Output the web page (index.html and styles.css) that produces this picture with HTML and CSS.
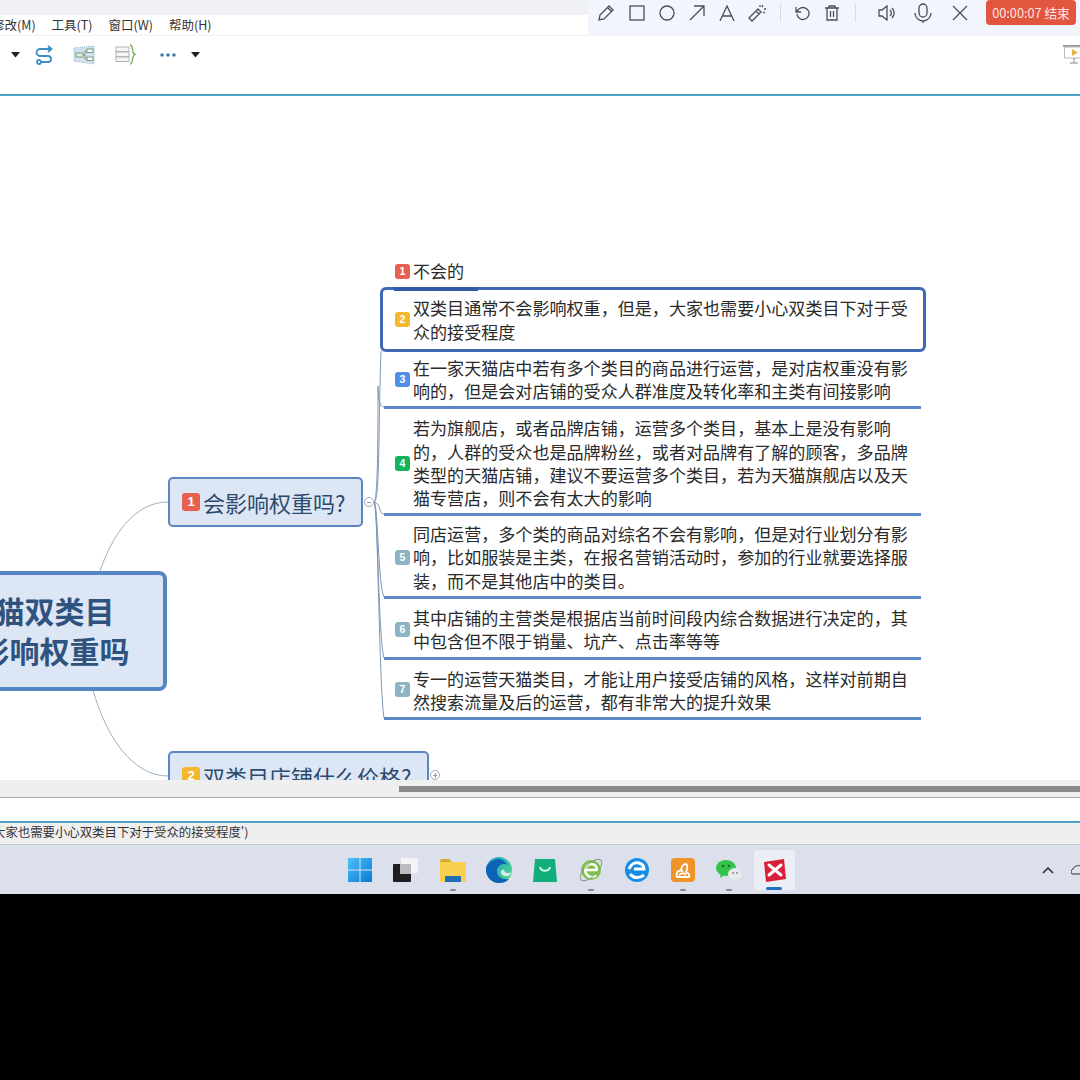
FILE: index.html
```html
<!DOCTYPE html>
<html lang="zh-CN">
<head>
<meta charset="utf-8">
<title>XMind</title>
<link rel="stylesheet" href="styles.css">
</head>
<body>
<div class="app">
  <div class="titlebar"></div>
  <nav class="menu">
    <span class="menu-first">修改(M)</span><span>工具(T)</span><span>窗口(W)</span><span>帮助(H)</span>
  </nav>
  <div class="toolbar">
    <svg class="tb caret-a" width="9" height="6" viewBox="0 0 9 6"><path d="M0 0h9L4.500 5.500z" fill="#222"/></svg>
    <svg class="tb loop" width="20" height="20" viewBox="0 0 20 20" fill="none" stroke="#3d8ec4" stroke-width="1.800"><path d="M17 4H6a3.500 3.500 0 0 0 0 7h8a3 3 0 0 1 0 6H7"/><path d="M14 1l3.500 3L14 7" /><circle cx="5" cy="17" r="2"/></svg>
    <svg class="tb struct" width="22" height="20" viewBox="0 0 22 20" fill="none"><path d="M1 3l20-2v18L1 16z" fill="#cfe2ee" stroke="#8db4cc" stroke-dasharray="1 1"/><rect x="3" y="8" width="7" height="4" fill="#e3efd8" stroke="#7e9c86"/><rect x="14" y="4" width="6" height="3.500" fill="#fff" stroke="#7e9c86"/><rect x="14" y="12" width="6" height="3.500" fill="#fff" stroke="#7e9c86"/><path d="M10 10h2M12 6v8M12 6h2M12 14h2" stroke="#7e9c86"/></svg>
    <svg class="tb summ" width="21" height="21" viewBox="0 0 21 21" fill="none"><rect x="1" y="3" width="13" height="4.500" fill="#f5f5f5" stroke="#b4b4b4"/><rect x="1" y="8" width="13" height="4.500" fill="#f5f5f5" stroke="#b4b4b4"/><rect x="1" y="13" width="13" height="4.500" fill="#f5f5f5" stroke="#b4b4b4"/><path d="M15 1c3 0 2 4 3 7 .3 1.500 1 2 2 2.500-1 .5-1.700 1-2 2.500-1 3 0 7-3 7" stroke="#6fa653" stroke-width="1.300"/></svg>
    <svg class="tb dots" width="16" height="4" viewBox="0 0 16 4"><g fill="#3a78a8"><circle cx="2" cy="2" r="1.700"/><circle cx="8" cy="2" r="1.700"/><circle cx="14" cy="2" r="1.700"/></g></svg>
    <svg class="tb caret-b" width="9" height="6" viewBox="0 0 9 6"><path d="M0 0h9L4.500 5.500z" fill="#222"/></svg>
    <svg class="tb present" width="22" height="20" viewBox="0 0 22 20" fill="none"><path d="M0 1h22" stroke="#777" stroke-width="1.500"/><rect x="1.500" y="2" width="19" height="11" fill="#fff" stroke="#bbb"/><path d="M9 4l6 3.500L9 11z" fill="#e6b54a"/><path d="M11 13v5M7 18h8" stroke="#888"/></svg>
  </div>
  <div class="rule"></div>

  <main class="canvas">
    <svg class="links" width="1080" height="684" viewBox="0 0 1080 684" fill="none" stroke="#9fb0c4" stroke-width="1">
      <path d="M100 475C112 440 134 406 168 406"/>
      <path d="M93 594C106 640 132 680 168 680"/>
      <path d="M374 406C380 406 378 340 381 255" stroke="#7f97b5"/>
      <path d="M374 406C378 406 378 330 378 290C378 300 379 311 384 311" stroke="#7f97b5"/>
      <path d="M374 406C382 408 378 418 384 418" stroke="#7f97b5"/>
      <path d="M374 406C378 406 378 490 384 501" stroke="#7f97b5"/>
      <path d="M374 406C378 406 378 540 384 562" stroke="#7f97b5"/>
      <path d="M374 406C378 406 379 590 384 622" stroke="#7f97b5"/>
    </svg>

    <div class="root">
      <p>天猫双类目<br>会影响权重吗</p>
    </div>

    <div class="topic topic-one"><span class="badge badge-big red">1</span>会影响权重吗?</div>
    <span class="toggle toggle-one"></span>
    <div class="topic topic-two"><span class="badge badge-big amber">2</span>双类目店铺什么价格?</div>
    <span class="toggle toggle-two"></span>

    <div class="list">
      <div class="row row-1"><span class="badge red">1</span><p>不会的</p></div>
      <div class="row row-2"><span class="badge amber">2</span><p>双类目通常不会影响权重，但是，大家也需要小心双类目下对于受<br>众的接受程度</p></div>
      <div class="row row-3"><span class="badge blue">3</span><p>在一家天猫店中若有多个类目的商品进行运营，是对店权重没有影<br>响的，但是会对店铺的受众人群准度及转化率和主类有间接影响</p></div>
      <div class="row row-4"><span class="badge green">4</span><p>若为旗舰店，或者品牌店铺，运营多个类目，基本上是没有影响<br>的，人群的受众也是品牌粉丝，或者对品牌有了解的顾客，多品牌<br>类型的天猫店铺，建议不要运营多个类目，若为天猫旗舰店以及天<br>猫专营店，则不会有太大的影响</p></div>
      <div class="row row-5"><span class="badge teal">5</span><p>同店运营，多个类的商品对综名不会有影响，但是对行业划分有影<br>响，比如服装是主类，在报名营销活动时，参加的行业就要选择服<br>装，而不是其他店中的类目。</p></div>
      <div class="row row-6"><span class="badge teal">6</span><p>其中店铺的主营类是根据店当前时间段内综合数据进行决定的，其<br>中包含但不限于销量、坑产、点击率等等</p></div>
      <div class="row row-7"><span class="badge teal">7</span><p>专一的运营天猫类目，才能让用户接受店铺的风格，这样对前期自<br>然搜索流量及后的运营，都有非常大的提升效果</p></div>
    </div>

    <svg class="cursor" width="12" height="18" viewBox="0 0 12 18"><path d="M1 1v13l3-3 2.500 5.500 2-1L6 10h4.500z" fill="#fff" stroke="#444" stroke-width="1"/></svg>
  </main>

  <div class="scrollbar"><div class="thumb"></div></div>
  <div class="blank"></div>
  <div class="rule"></div>
  <div class="status"><span>大家也需要小心双类目下对于受众的接受程度')</span></div>

  <footer class="taskbar">
    <div class="slot">
      <svg width="26" height="26" viewBox="0 0 26 26"><defs><linearGradient id="w" x1="0" y1="0" x2="1" y2="1"><stop offset="0" stop-color="#4cc2f5"/><stop offset="1" stop-color="#0a78d8"/></linearGradient></defs><path d="M1 1h11.500v11.500H1zM13.500 1H25v11.500H13.500zM1 13.500h11.500V25H1zM13.500 13.500H25V25H13.500z" fill="url(#w)"/></svg>
    </div>
    <div class="slot slot-task">
      <svg width="25" height="24" viewBox="0 0 25 24"><rect x="8" y="0" width="17" height="15" rx="1" fill="#f4f4f7"/><rect x="0" y="6" width="18" height="18" rx="1" fill="#1e1e22"/><rect x="7" y="6" width="11" height="10" fill="#bcbcc0"/></svg>
    </div>
    <div class="slot running">
      <svg width="26" height="25" viewBox="0 0 26 25"><path d="M0 3a2 2 0 0 1 2-2h7l3 3H0z" fill="#d9a92d"/><rect x="0" y="4" width="26" height="20" rx="1" fill="#f8cf4e"/><path d="M5 24v-5q0-1 1-1h14q1 0 1 1v5z" fill="#1e6fb8"/></svg>
    </div>
    <div class="slot">
      <svg width="26" height="26" viewBox="0 0 26 26"><defs><linearGradient id="e" x1="0" y1="0" x2="1" y2="0.700"><stop offset="0" stop-color="#1f9bd0"/><stop offset="1" stop-color="#48d48c"/></linearGradient></defs><circle cx="13" cy="13" r="13" fill="url(#e)"/><path d="M13 2C6 2 0 7 0 13c0 7 6 13 13 13 4 0 7-1 10-4-6 1-12-2-12-8 0-4 3-7 7-7 2 0 3 .5 4 1.500C19 4 16 2 13 2z" fill="#0c63b6"/><path d="M15 15c0 3 3 5 7 4 2-.7 3-2 3-4-1 1-3 1.500-4 1-2-.5-3-2-3-3.500-2 0-3 1-3 2.500z" fill="#d6ecef"/></svg>
    </div>
    <div class="slot">
      <svg width="24" height="25" viewBox="0 0 24 25"><path d="M2 1h20l2 23H0z" fill="#12ae7c"/><path d="M7 9c1 5 9 5 10 0" fill="none" stroke="#d8f5ea" stroke-width="1.800"/></svg>
    </div>
    <div class="slot running">
      <svg width="26" height="26" viewBox="0 0 26 26"><circle cx="13" cy="13" r="10" fill="#7cc242"/><path d="M7 13h12c0-4-3-6-6-6s-6 3-6 6 3 7 6 7c2 0 4-1 5-2" fill="none" stroke="#fff" stroke-width="2.500"/><ellipse cx="13" cy="13" rx="14" ry="6" transform="rotate(-45 13 13)" fill="none" stroke="#8a9a80"/></svg>
    </div>
    <div class="slot">
      <svg width="24" height="24" viewBox="0 0 24 24"><circle cx="12" cy="12" r="12" fill="#148ce8"/><path d="M4 11c2-5 6-7 10-6 3 1 5 3 5 6H9M5 16c3 4 9 5 14 1" fill="none" stroke="#fff" stroke-width="3"/></svg>
    </div>
    <div class="slot running">
      <svg width="24" height="24" viewBox="0 0 24 24"><rect width="24" height="24" rx="4" fill="#f0942a"/><path d="M6 19c-2-5 2-7 5-6-2-3 1-7 4-7 3 2 1 5 0 8 2 1 4 3 3 5zM8 17c2-2 5-2 7 0" fill="none" stroke="#fff" stroke-width="1.800"/></svg>
    </div>
    <div class="slot running">
      <svg width="26" height="20" viewBox="0 0 26 20"><ellipse cx="10" cy="8" rx="10" ry="8" fill="#33c24a"/><path d="M5 13l-1 5 5-3z" fill="#33c24a"/><ellipse cx="19" cy="14" rx="7" ry="6" fill="#e8eaec"/><circle cx="17" cy="13" r="1" fill="#889"/><circle cx="21" cy="13" r="1" fill="#889"/><circle cx="7" cy="6" r="1.200" fill="#16702a"/><circle cx="13" cy="6" r="1.200" fill="#16702a"/></svg>
    </div>
    <div class="slot active">
      <svg width="22" height="23" viewBox="0 0 22 23"><path d="M0 3l20-3 2 20-20 3z" fill="#d8203a"/><path d="M5 6l12 10M17 6L5 16" stroke="#fff" stroke-width="3" stroke-linecap="round"/></svg>
    </div>
    <svg class="chevron" width="14" height="8" viewBox="0 0 14 8" fill="none" stroke="#2a2a30" stroke-width="1.500"><path d="M2 7l5-5 5 5"/></svg>
    <svg class="cloud" width="14" height="14" viewBox="0 0 14 14" fill="#dfe3ec" stroke="#333"><path d="M1 11a3 3 0 0 1 1-5c1-3 5-4 8-3h6v8z"/></svg>
  </footer>
</div>

<aside class="recorder">
  <svg width="18" height="18" viewBox="0 0 18 18" class="ri"><path d="M2 16l1-5L12 2l4 4-9 9zM10.500 3.500l4 4"/></svg>
  <svg width="16" height="16" viewBox="0 0 16 16" class="ri"><rect x="1" y="1" width="14" height="14"/></svg>
  <svg width="16" height="16" viewBox="0 0 16 16" class="ri"><circle cx="8" cy="8" r="7"/></svg>
  <svg width="16" height="16" viewBox="0 0 16 16" class="ri"><path d="M1 15L15 1M5 1h10v10"/></svg>
  <svg width="16" height="16" viewBox="0 0 16 16" class="ri"><path d="M1 16L8 1l7 15M3.500 11h9"/></svg>
  <svg width="18" height="18" viewBox="0 0 18 18" class="ri"><path d="M1 14l9-9 3 3-9 9zM8 7l3 3M12 1v2M16 5h2M15 1l-1 2M17 9l-2-1"/></svg>
  <i class="sep"></i>
  <svg width="16" height="16" viewBox="0 0 16 16" class="ri"><path d="M3 9a6 6 0 1 0 2-5L2 7M2 2v5h5"/></svg>
  <svg width="14" height="16" viewBox="0 0 14 16" class="ri"><path d="M0 3h14M4 3V1h6v2M2 3v12h10V3M5.500 6v6M8.500 6v6"/></svg>
  <i class="sep"></i>
  <svg width="18" height="16" viewBox="0 0 18 16" class="ri"><path d="M1 5h3l5-4v14l-5-4H1zM12 5a4 4 0 0 1 0 6M14 3a7 7 0 0 1 0 10"/></svg>
  <svg width="18" height="20" viewBox="0 0 18 20" class="ri"><rect x="5" y="1" width="8" height="13" rx="4"/><path d="M1 10a8 8 0 0 0 16 0M9 18v2"/></svg>
  <svg width="16" height="16" viewBox="0 0 16 16" class="ri"><path d="M1 1l14 14M15 1L1 15"/></svg>
  <button class="timer">00:00:07 结束</button>
</aside>
</body>
</html>
```
FILE: styles.css
```css
* { box-sizing: border-box; }
html, body { margin: 0; background: #000; }
body { width: 1080px; height: 1080px; overflow: hidden; position: relative; font-family: "Noto Sans CJK SC", "Noto Sans", sans-serif; color: #222; }
p { margin: 0; }
.app { height: 894px; display: flex; flex-direction: column; overflow: hidden; }
.titlebar { height: 15px; background: #f0f1f5; flex: none; }
.menu { height: 21px; flex: none; background: #fff; border-bottom: 1px solid #f0f0f0; padding-bottom: 1px; display: flex; align-items: center; gap: 16px; font-size: 12.500px; color: #333; overflow: hidden; white-space: nowrap; }
.menu-first { margin-left: -8px; }
.toolbar { height: 58px; flex: none; background: #fff; display: flex; align-items: center; padding: 0 0 21px 11px; overflow: hidden; }
.tb { flex: none; }
.loop { margin-left: 14px; }
.struct { margin-left: 19px; }
.summ { margin-left: 20px; }
.dots { margin-left: 24px; }
.caret-b { margin-left: 15px; }
.present { margin-left: auto; margin-right: -5px; }
.rule { height: 2px; flex: none; background: #4fa3c7; }
.canvas { height: 684px; flex: none; background: #fff; position: relative; overflow: hidden; }
.links { position: absolute; left: 0; top: 0; }
.root { position: absolute; left: -88px; top: 475px; width: 255px; height: 120px; border: 4px solid #5585c4; border-radius: 8px; background: #dde6f4; display: flex; align-items: center; justify-content: center; font-size: 30px; line-height: 40px; font-weight: 700; color: #2f527f; text-align: center; white-space: nowrap; padding-bottom: 2px; }
.topic { position: absolute; left: 168px; border: 2px solid #5b87c0; border-radius: 5px; background: #dde6f4; display: flex; align-items: center; gap: 3px; padding-left: 12px; font-size: 22px; color: #2c4a6e; white-space: nowrap; }
.topic-one { top: 381px; width: 195px; height: 50px; }
.topic-two { top: 655px; width: 261px; height: 50px; }
.toggle { position: absolute; width: 10px; height: 10px; border: 1px solid #9db0c4; border-radius: 50%; background: #fff; }
.toggle::before { content: ""; position: absolute; left: 2px; right: 2px; top: 3.500px; height: 1px; background: #8a9bb0; }
.toggle-one { left: 364px; top: 401px; }
.toggle-two { left: 430px; top: 674px; }
.toggle-two::after { content: ""; position: absolute; top: 1.500px; bottom: 1.500px; left: 3.500px; width: 1px; background: #8a9bb0; }
.badge { flex: none; width: 15px; height: 15px; border-radius: 3px; color: #fff; font: 700 10.500px/15px "Liberation Sans", sans-serif; text-align: center; }
.badge-big { width: 18px; height: 18px; font-size: 13px; line-height: 18px; }
.red { background: #e8604f; }
.amber { background: #f5b72e; }
.blue { background: #4f8fe8; }
.green { background: #12b35c; }
.teal { background: #8db4c4; }
.list { position: absolute; left: 384px; top: 162px; width: 537px; display: flex; flex-direction: column; }
.row { position: relative; display: flex; align-items: center; gap: 3px; padding-left: 11px; border-bottom: 3px solid #5b87c4; font-size: 17.070px; line-height: 23.400px; color: #2a2a2a; white-space: nowrap; }
.row-1 { height: 28px; width: 94px; border-bottom: 0; padding-bottom: 2px; z-index: 2; }
.row-1::after { content: ""; position: absolute; left: 10px; right: 0; bottom: -4.500px; height: 3.500px; background: #2f5aa8; }
.row-2 { height: 65px; width: 546px; margin-left: -4px; border: 3.500px solid #4069b4; border-radius: 6px; padding-left: 12px; z-index: 1; background: #fff; margin-top: 1px; }
.row-3 { height: 57px; }
.row-4 { height: 107px; padding-top: 4px; }
.row-5 { height: 83px; padding-top: 2px; }
.row-6 { height: 61px; padding-top: 2px; line-height: 23px; }
.row-7 { height: 60px; padding-top: 2px; line-height: 23px; }
.cursor { position: absolute; left: 605px; top: 229px; }
.scrollbar { height: 18px; flex: none; background: #efefef; border-bottom: 1px solid #aaa; padding: 6px 0 5px 399px; }
.thumb { height: 6px; background: #8a8a8a; }
.blank { height: 23px; flex: none; background: #fff; }
.status { height: 22px; flex: none; background: #efefef; border-bottom: 1px solid #c4c6cc; font-size: 12.400px; line-height: 19px; color: #333; white-space: nowrap; overflow: hidden; }
.status span { margin-left: -7px; display: inline-block; }
.taskbar { height: 49px; flex: none; background: #dce0ed; display: flex; align-items: center; padding-left: 337px; position: relative; }
.slot { position: relative; width: 46px; height: 40px; flex: none; display: flex; align-items: center; justify-content: center; padding-top: 1px; }
.slot-task { width: 45px; margin-right: 1px; }
.slot:nth-child(3) { margin-left: 1px; }
.running::after { content: ""; position: absolute; left: 20px; bottom: -1px; width: 6px; height: 2px; border-radius: 1px; background: #888; }
.active { width: 41px; margin-left: 2px; background: #eceef6; border-radius: 3px; }
.active::after { content: ""; position: absolute; left: 12px; bottom: 0; width: 16px; height: 3px; border-radius: 2px; background: #1f6fc0; }
.chevron { margin-left: 246px; flex: none; }
.cloud { margin-left: 16px; flex: none; }
.recorder { position: absolute; right: 0; top: 0; width: 492px; height: 36px; background: #f3f5fd; display: flex; align-items: center; padding: 0 4px 11px 9px; }
.ri { flex: none; fill: none; stroke: #4a4e58; stroke-width: 1.300; }
.sep { width: 1px; height: 18px; background: #d9dbe2; flex: none; }
.recorder > :nth-child(2), .recorder > :nth-child(3), .recorder > :nth-child(4), .recorder > :nth-child(5) { margin-left: 14px; }
.recorder > :nth-child(6) { margin-left: 13px; }
.recorder > :nth-child(7) { margin-left: 14px; }
.recorder > :nth-child(8) { margin-left: 13px; }
.recorder > :nth-child(9) { margin-left: 15px; }
.recorder > :nth-child(10) { margin-left: 16px; }
.recorder > :nth-child(11) { margin-left: 22px; }
.recorder > :nth-child(12) { margin-left: 18px; }
.recorder > :nth-child(13) { margin-left: 20px; }
.timer { margin: 0 0 0 auto; padding: 0; border: 0; width: 90px; height: 25px; border-radius: 4px; background: #e2553f; color: #fbe8e2; font: 12.700px/25px "Noto Sans CJK SC", sans-serif; }
```
